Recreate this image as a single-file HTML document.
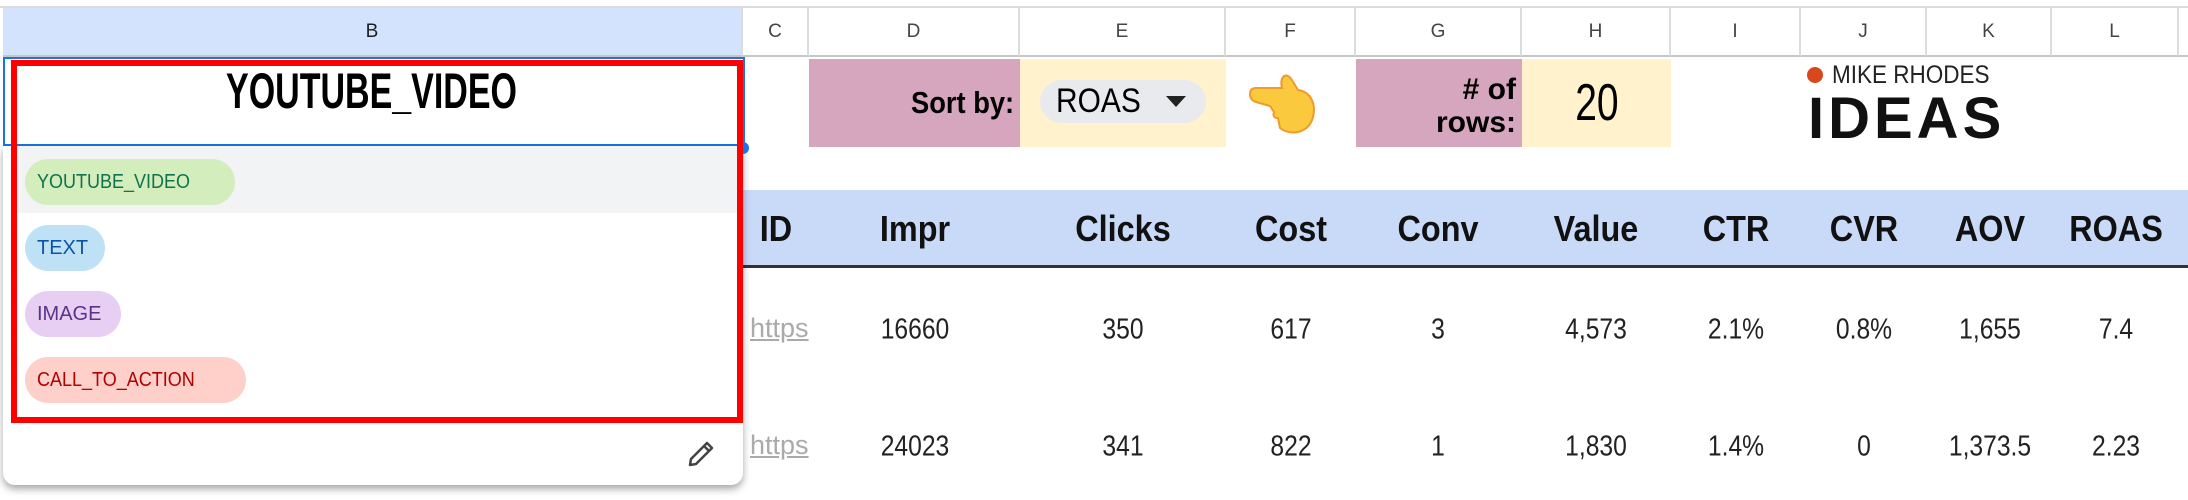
<!DOCTYPE html>
<html><head><meta charset="utf-8"><style>
*{margin:0;padding:0;box-sizing:border-box}
body{width:2188px;height:500px;overflow:hidden;background:#fff;font-family:"Liberation Sans",Arial,sans-serif;position:relative}
.a{position:absolute}
.hdr{position:absolute;top:8px;height:49px;border-right:2px solid #dadce0;border-bottom:2px solid #c4c7c5;color:#444;font-size:19px;display:flex;align-items:center;justify-content:center}
.th{position:absolute;top:190px;height:78px;display:flex;align-items:center;justify-content:center;font-weight:bold;font-size:36px;color:#111;transform:translateX(-50%) scaleX(.9);white-space:nowrap}
.td{position:absolute;font-size:29px;color:#222;transform:translate(-50%,-50%) scaleX(.85);white-space:nowrap}
.chip{position:absolute;left:25px;height:46px;border-radius:23px;font-size:20px;display:flex;align-items:center;padding:0 12px}
</style></head><body>
<div class="a" style="left:0;top:0;width:2188px;height:8px;background:#fff;border-bottom:2px solid #dadce0"></div>
<div class="hdr" style="left:3px;width:740px;background:#d3e3fd;color:#1f1f1f">B</div>
<div class="hdr" style="left:743px;width:66px">C</div>
<div class="hdr" style="left:809px;width:211px">D</div>
<div class="hdr" style="left:1020px;width:206px">E</div>
<div class="hdr" style="left:1226px;width:130px">F</div>
<div class="hdr" style="left:1356px;width:166px">G</div>
<div class="hdr" style="left:1522px;width:149px">H</div>
<div class="hdr" style="left:1671px;width:130px">I</div>
<div class="hdr" style="left:1801px;width:126px">J</div>
<div class="hdr" style="left:1927px;width:125px">K</div>
<div class="hdr" style="left:2052px;width:127px">L</div>
<div class="hdr" style="left:2179px;width:20px"></div>

<div class="a" style="left:809px;top:59px;width:211px;height:88px;background:#d5a6bd;display:flex;align-items:center;justify-content:flex-end;padding-right:6px;font-weight:bold;font-size:31px"><span style="display:inline-block;transform:scaleX(.88);transform-origin:right">Sort by:</span></div>
<div class="a" style="left:1020px;top:59px;width:206px;height:88px;background:#fff2cc"></div>
<div class="a" style="left:1040px;top:80px;width:166px;height:43px;background:#e8eaed;border-radius:22px;font-size:34px;display:flex;align-items:center;padding-left:16px"><span style="display:inline-block;transform:scaleX(.88);transform-origin:left">ROAS</span><span style="display:inline-block;margin-left:14px;border-left:10px solid transparent;border-right:10px solid transparent;border-top:11px solid #222"></span></div>
<svg class="a" style="left:1248px;top:72px" width="72" height="64" viewBox="0 0 72 64">
<path d="M2 22 Q2 16 8 16 L34 16 Q32 8 36 4 Q40 2 44 8 L50 18 Q64 20 66 36 Q66 56 50 60 Q40 62 32 56 L30 46 Q24 46 26 40 L22 34 L8 30 Q2 28 2 22Z" fill="#fbc93d" stroke="#f09a2c" stroke-width="2"/>
</svg>
<div class="a" style="left:1356px;top:59px;width:166px;height:88px;background:#d5a6bd;text-align:right;padding:14px 6px 0 0;font-weight:bold;font-size:30px;line-height:33px"># of<br>rows:</div>
<div class="a" style="left:1522px;top:59px;width:149px;height:88px;background:#fff2cc;display:flex;align-items:center;justify-content:center;font-size:52px"><span style="display:inline-block;transform:scaleX(.75)">20</span></div>
<div class="a" style="left:1807px;top:67px;width:16px;height:16px;border-radius:50%;background:#d9481c"></div>
<div class="a" style="left:1832px;top:61px;font-size:25px;color:#222;transform:scaleX(.9);transform-origin:left">MIKE RHODES</div>
<div class="a" style="left:1808px;top:90px;font-size:58px;font-weight:900;color:#111;letter-spacing:4px;line-height:58px">IDEAS</div>

<div class="a" style="left:743px;top:190px;width:1445px;height:78px;background:#c9daf8;border-bottom:3px solid #333"></div>
<div class="th" style="left:776px">ID</div>
<div class="th" style="left:915px">Impr</div>
<div class="th" style="left:1123px">Clicks</div>
<div class="th" style="left:1291px">Cost</div>
<div class="th" style="left:1438px">Conv</div>
<div class="th" style="left:1596px">Value</div>
<div class="th" style="left:1736px">CTR</div>
<div class="th" style="left:1864px">CVR</div>
<div class="th" style="left:1990px">AOV</div>
<div class="th" style="left:2116px">ROAS</div>

<div class="a" style="left:750px;top:313px;width:59px;overflow:hidden;font-size:27px;color:#aaa;text-decoration:underline">https</div>
<div class="a" style="left:750px;top:430px;width:59px;overflow:hidden;font-size:27px;color:#aaa;text-decoration:underline">https</div>
<div class="td" style="left:915px;top:330px">16660</div>
<div class="td" style="left:1123px;top:330px">350</div>
<div class="td" style="left:1291px;top:330px">617</div>
<div class="td" style="left:1438px;top:330px">3</div>
<div class="td" style="left:1596px;top:330px">4,573</div>
<div class="td" style="left:1736px;top:330px">2.1%</div>
<div class="td" style="left:1864px;top:330px">0.8%</div>
<div class="td" style="left:1990px;top:330px">1,655</div>
<div class="td" style="left:2116px;top:330px">7.4</div>
<div class="td" style="left:915px;top:447px">24023</div>
<div class="td" style="left:1123px;top:447px">341</div>
<div class="td" style="left:1291px;top:447px">822</div>
<div class="td" style="left:1438px;top:447px">1</div>
<div class="td" style="left:1596px;top:447px">1,830</div>
<div class="td" style="left:1736px;top:447px">1.4%</div>
<div class="td" style="left:1864px;top:447px">0</div>
<div class="td" style="left:1990px;top:447px">1,373.5</div>
<div class="td" style="left:2116px;top:447px">2.23</div>

<div class="a" style="left:3px;top:57px;width:742px;height:89px;border:2px solid #1a73e8;background:#fff"></div>
<div class="a" style="left:3px;top:146px;width:740px;height:339px;background:#fff;border-radius:0 0 12px 12px;box-shadow:0 4px 8px rgba(0,0,0,.35)"></div>
<div class="a" style="left:12px;top:146px;width:726px;height:67px;background:#f1f3f4"></div>
<div class="a" style="left:737px;top:142px;width:12px;height:12px;border-radius:50%;background:#1a73e8"></div>
<div class="a" style="left:0;top:66px;width:743px;text-align:center;font-size:50px;line-height:50px;color:#000;font-weight:bold;transform:scaleX(.68)">YOUTUBE_VIDEO</div>
<div class="chip" style="top:159px;width:210px;background:#d4edbc;color:#11734b"><span style="display:inline-block;transform:scaleX(.9);transform-origin:left">YOUTUBE_VIDEO</span></div>
<div class="chip" style="top:225px;width:80px;background:#bfe1f6;color:#0a53a8">TEXT</div>
<div class="chip" style="top:291px;width:96px;background:#e6cff2;color:#5a3286">IMAGE</div>
<div class="chip" style="top:357px;width:221px;background:#ffcfc9;color:#b10202"><span style="display:inline-block;transform:scaleX(.9);transform-origin:left">CALL_TO_ACTION</span></div>
<svg class="a" style="left:685px;top:438px" width="32" height="32" viewBox="0 0 32 32"><path d="M5 27 L6 21 L22 5 L27 10 L11 26 Z M19 8 L24 13" fill="none" stroke="#444" stroke-width="2.5" stroke-linejoin="round"/></svg>
<div class="a" style="left:11px;top:60px;width:732px;height:363px;border:6px solid #ff0000"></div>
</body></html>
